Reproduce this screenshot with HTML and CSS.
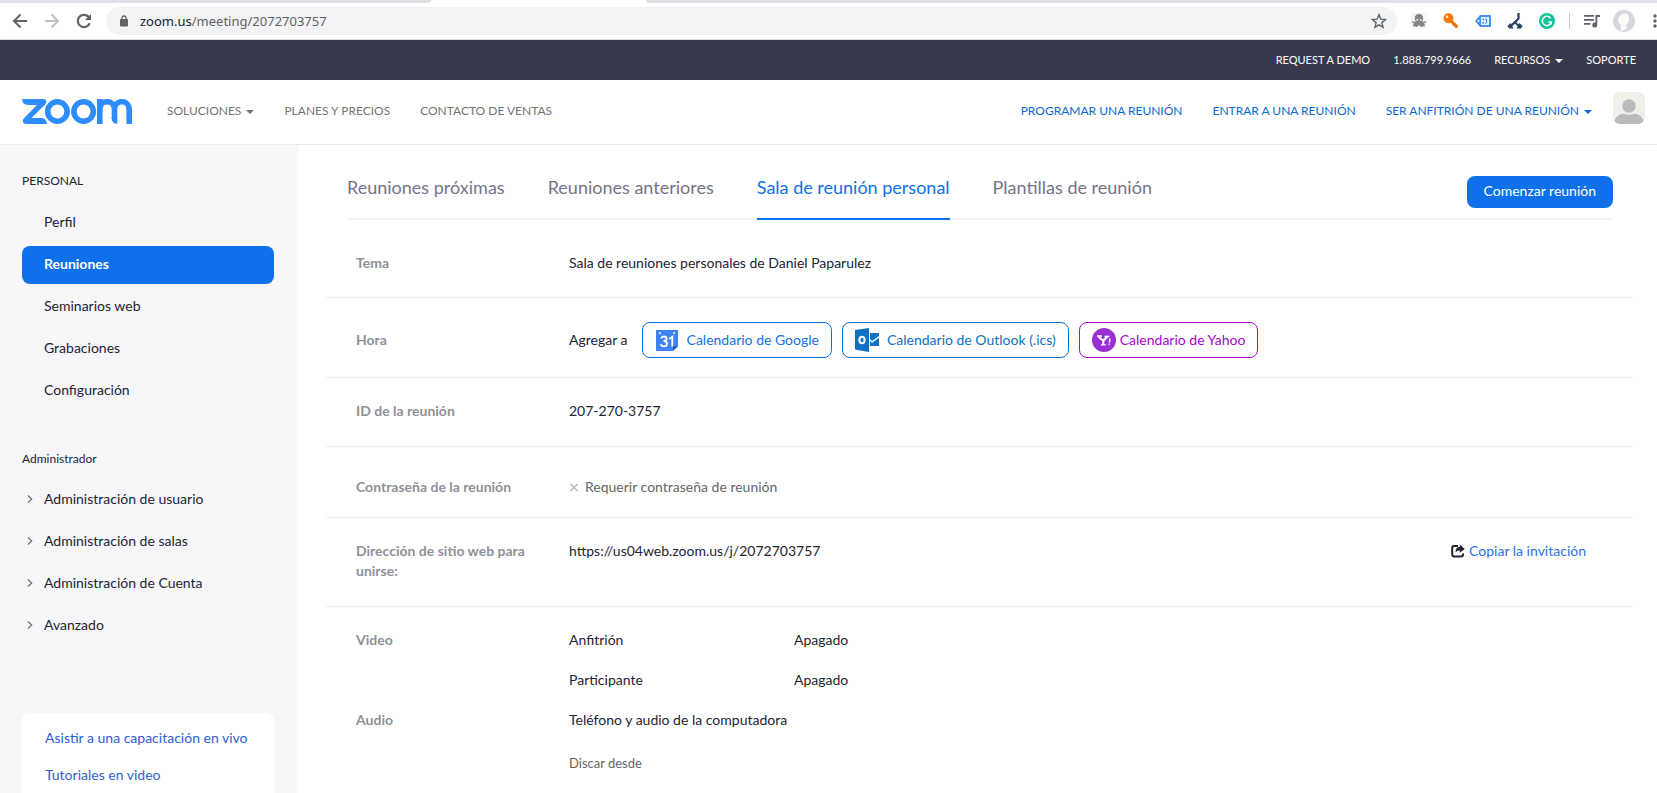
FILE: index.html
```html
<!DOCTYPE html>
<html lang="es">
<head>
<meta charset="utf-8">
<title>Mis reuniones - Zoom</title>
<link rel="stylesheet" href="styles.css">
</head>
<body>
<div class="window">
  <div class="tabstrip"><span class="tab-left"></span><span class="tab-right"></span></div>
  <div class="toolbar">
    <div class="nav-buttons">
      <button aria-label="Atrás"><svg width="16" height="16" viewBox="0 0 16 16" fill="none" stroke="#5f6368" stroke-width="2"><path d="M15 8H2.500M8.500 1.500L2 8l6.500 6.500"/></svg></button>
      <button aria-label="Adelante"><svg width="16" height="16" viewBox="0 0 16 16" fill="none" stroke="#bdbfc1" stroke-width="2"><path d="M1 8h12.500M7.500 1.500L14 8l-6.500 6.500"/></svg></button>
      <button aria-label="Recargar"><svg width="16" height="16" viewBox="0 0 16 16" fill="none" stroke="#5f6368" stroke-width="2.200"><path d="M13.800 10.200A6.200 6.200 0 1 1 12.400 3.600L14 5.200"/><path d="M15 1v6H9z" fill="#5f6368" stroke="none"/></svg></button>
    </div>
    <div class="address">
      <svg width="8" height="12" viewBox="0 0 8 12"><rect y="4" width="8" height="7.500" rx="1" fill="#5f6368"/><path d="M2 4.500V3a2 2 0 0 1 4 0v1.500" fill="none" stroke="#5f6368" stroke-width="1.300"/></svg>
      <span class="url"><b>zoom.us</b>/meeting/2072703757</span>
      <svg class="star" width="16" height="16" viewBox="0 0 16 16" fill="none" stroke="#5f6368" stroke-width="1.400"><path d="M8 1.800l1.800 4.300 4.700.4-3.600 3.100 1.100 4.600L8 11.800l-4 2.400 1.100-4.600L1.500 6.500l4.700-.4z"/></svg>
    </div>
    <div class="extensions">
      <svg width="16" height="16" viewBox="0 0 16 16"><path d="M0 0h16v16H0z" fill="#f6f6f6"/><path d="M8 1c3 0 4.500 2 4.200 4.500-.2 1.500-.8 2.500-.7 3.500l3-.8c1 .3.600 1.600-.3 1.600l-1.600.7c1 .8 1.700 1.500 1.100 2.500-.7.900-1.400.3-1.900.3-.5 1-1.500 1-2.300.3L8 12.200l-1.500 1.400c-.8.700-1.800.7-2.300-.3-.5 0-1.200.6-1.900-.3-.6-1 .1-1.700 1.100-2.500l-1.600-.7c-.9 0-1.300-1.300-.3-1.600l3 .8c.1-1-.5-2-.7-3.500C3.500 3 5 1 8 1z" fill="#858585"/><circle cx="6.200" cy="6.800" r=".9" fill="#fff"/><circle cx="9.800" cy="6.800" r=".9" fill="#fff"/></svg>
      <svg width="16" height="16" viewBox="0 0 16 16"><path d="M8.500 6.500l6.500 6-.5 2.500-2.500-.2-.7-1.600-1.700-.7-.5-1.600L6 8.500z" fill="#f26c0c"/><circle cx="5.500" cy="5.300" r="5" fill="#ff7a00"/><circle cx="4" cy="3.800" r="1.200" fill="#fff"/></svg>
      <svg width="16" height="16" viewBox="0 0 16 16"><path d="M5 2h11v12H5L0 8z" fill="#4a90f5"/><path d="M6 4h8v8H6z" fill="#e4efff"/><path d="M7.500 5.800h1.400v1.400H7.500zM7.500 9h1.400v1.400H7.500z" fill="#2f6fd6"/><path d="M10.800 5.300q1.800 2.700 0 5.400" stroke="#2f6fd6" fill="none"/><circle cx="3.500" cy="8" r="1" fill="#fff"/></svg>
      <svg width="16" height="16" viewBox="0 0 16 16" fill="none" stroke="#24415e"><path d="M11.500 0v5.500L3.500 13.500" stroke-width="2.200"/><path d="M8 9.500l4.500 4" stroke-width="1.800"/><path d="M.5 13l3-3 3 5.500H2zM15.500 13l-3-3-3 5.500H14z" fill="#24415e" stroke="none"/></svg>
      <svg width="16" height="16" viewBox="0 0 16 16"><circle cx="8" cy="8" r="8" fill="#15c39a"/><path d="M11.600 5.200A4.600 4.600 0 1 0 12.400 9H9.200M12.300 9v2.500" fill="none" stroke="#fff" stroke-width="1.500"/></svg>
      <span class="divider"></span>
      <svg width="16" height="16" viewBox="0 0 16 16" fill="#5f6368"><path d="M0 2h10v1.800H0zM0 6h10v1.800H0zM0 10h6.500v1.800H0zM11.500 2H16v2h-2.700v8a2.500 2.500 0 1 1-1.800-2.400z"/></svg>
      <svg class="profile" width="22" height="22" viewBox="0 0 22 22"><circle cx="11" cy="11" r="11" fill="#d5d7dc"/><path d="M11.500 3.500c4 0 5 3 4.500 6.200-.3 2.500-1.500 4.200-2.700 4.800l.2 4.500L8 21l-.5-6C5.500 13 5 10 5.500 8 6 5 8.500 3.500 11.500 3.500z" fill="#fafafa"/></svg>
      <svg class="more" width="4" height="16" viewBox="0 0 4 16" fill="#5f6368"><circle cx="2" cy="3" r="1.700"/><circle cx="2" cy="8" r="1.700"/><circle cx="2" cy="13" r="1.700"/></svg>
    </div>
  </div>

  <nav class="topbar">
    <a href="#">REQUEST A DEMO</a>
    <a href="#">1.888.799.9666</a>
    <a href="#">RECURSOS<span class="caret"></span></a>
    <a href="#">SOPORTE</a>
  </nav>

  <header class="header">
    <a class="logo" href="#" aria-label="zoom"><svg width="110" height="25" viewBox="0 0 110 25"><path d="M0 0H21.500Q25.200.5 24.200 3.500Q23.800 4.800 22.600 6L9.500 19H19.500Q24.500 19.300 25 25H4.500Q.5 24.800.8 21.500Q1 20.200 2.200 19L15 6H6Q.5 5.800 0 0Z" fill="#2d8cff"/><g fill="none" stroke="#2d8cff" stroke-width="5.600"><circle cx="35.400" cy="12.500" r="9.700"/><circle cx="61.600" cy="12.500" r="9.700"/><path d="M77.800 25V0M77.800 11C77.800 0 92.500 0 92.500 11V20M92.500 11C92.500 0 107.200 0 107.200 11V25"/></g><path d="M75 0h3l3 4-3 21q-3-.5-3-4zM89.700 18h5.600v7q-5.200-.5-5.600-5z" fill="#2d8cff"/></svg></a>
    <nav class="nav-main">
      <a href="#">SOLUCIONES<span class="caret"></span></a>
      <a href="#">PLANES Y PRECIOS</a>
      <a href="#">CONTACTO DE VENTAS</a>
    </nav>
    <nav class="nav-user">
      <a href="#">PROGRAMAR UNA REUNIÓN</a>
      <a href="#">ENTRAR A UNA REUNIÓN</a>
      <a href="#">SER ANFITRIÓN DE UNA REUNIÓN<span class="caret"></span></a>
    </nav>
    <svg class="avatar" width="32" height="32" viewBox="0 0 32 32"><rect width="32" height="32" rx="7" fill="#f0efea"/><circle cx="16" cy="14" r="6.700" fill="#bababa"/><path d="M1.500 29C3 24 8 21.500 10.500 21.800q5.500 2 11 0C24 21.500 29 24 30.500 29q-2 3-6 3h-17q-4 0-6-3z" fill="#bababa"/></svg>
  </header>

  <div class="page">
    <aside class="sidebar">
      <h2>PERSONAL</h2>
      <ul class="menu">
        <li><a href="#">Perfil</a></li>
        <li><a class="active" href="#">Reuniones</a></li>
        <li><a href="#">Seminarios web</a></li>
        <li><a href="#">Grabaciones</a></li>
        <li><a href="#">Configuración</a></li>
      </ul>
      <h2 class="admin">Administrador</h2>
      <ul class="menu">
        <li><a class="group" href="#"><svg width="6" height="8" viewBox="0 0 6 8"><path d="M1 .5L4.700 4 1 7.500"/></svg>Administración de usuario</a></li>
        <li><a class="group" href="#"><svg width="6" height="8" viewBox="0 0 6 8"><path d="M1 .5L4.700 4 1 7.500"/></svg>Administración de salas</a></li>
        <li><a class="group" href="#"><svg width="6" height="8" viewBox="0 0 6 8"><path d="M1 .5L4.700 4 1 7.500"/></svg>Administración de Cuenta</a></li>
        <li><a class="group" href="#"><svg width="6" height="8" viewBox="0 0 6 8"><path d="M1 .5L4.700 4 1 7.500"/></svg>Avanzado</a></li>
      </ul>
      <div class="help">
        <a href="#">Asistir a una capacitación en vivo</a>
        <a href="#">Tutoriales en video</a>
      </div>
    </aside>

    <main class="main">
      <div class="tabs">
        <nav class="tab-list">
          <a href="#">Reuniones próximas</a>
          <a href="#">Reuniones anteriores</a>
          <a class="current" href="#">Sala de reunión personal</a>
          <a href="#">Plantillas de reunión</a>
        </nav>
        <button class="start">Comenzar reunión</button>
      </div>

      <dl class="details">
        <div class="row topic"><dt>Tema</dt><dd>Sala de reuniones personales de Daniel Paparulez</dd></div>
        <div class="row time"><dt>Hora</dt>
          <dd class="calendars">
            <span>Agregar a</span>
            <a class="cal google" href="#"><svg width="24" height="24" viewBox="0 0 24 24"><path d="M1 2h22v16l-5 5H1z" fill="#3f83f6"/><path d="M18 23l5-5h-5z" fill="#2a5fc4"/><circle cx="5" cy="5" r="1" fill="#fff"/><circle cx="19" cy="5" r="1" fill="#fff"/><path d="M6 10.500q.8-2 3-2 2.600 0 2.600 2.300Q11.600 13 8.500 13q3.500 0 3.500 2.800 0 2.600-3 2.600-2.700 0-3.200-2.300M14.200 11l3.100-2.200v9.700" fill="none" stroke="#fff" stroke-width="1.800"/></svg>Calendario de Google</a>
            <a class="cal outlook" href="#"><svg width="24" height="24" viewBox="0 0 24 24"><path d="M0 2l14-2v24L0 21.500z" fill="#0f6fc0"/><ellipse cx="7" cy="12" rx="2.600" ry="3.300" fill="none" stroke="#fff" stroke-width="2"/><path d="M15 5h9v3l-7 5-2-2zM15 13l2 1.700 7-5V18h-9z" fill="#0f6fc0"/></svg>Calendario de Outlook (.ics)</a>
            <a class="cal yahoo" href="#"><svg width="24" height="24" viewBox="0 0 24 24"><circle cx="12" cy="12" r="12" fill="#9b2fd3"/><path d="M6.500 8.800l4.800 4 4-4M11.300 12.500v4.200" fill="none" stroke="#fff" stroke-width="2"/><path d="M5 8h5M12.500 8.500h5M9 16.800h4.800" stroke="#fff" stroke-width="1.300"/><path d="M17.800 10.500l-.3 4M17.300 15.500v1.300" stroke="#fff" stroke-width="1.500"/></svg>Calendario de Yahoo</a>
          </dd></div>
        <div class="row"><dt>ID de la reunión</dt><dd>207-270-3757</dd></div>
        <div class="row password"><dt>Contraseña de la reunión</dt><dd class="off"><svg width="10" height="10" viewBox="0 0 10 10"><path d="M1.500 2l7 7M8.500 2l-7 7" stroke="#b5b5b5" stroke-width="1.300"/></svg>Requerir contraseña de reunión</dd></div>
        <div class="row"><dt>Dirección de sitio web para unirse:</dt><dd class="join"><span>https://us04web.zoom.us/j/2072703757</span>
          <a class="copy" href="#"><svg width="14" height="14" viewBox="0 0 14 14"><path d="M7 2H3.200Q1.200 2 1.200 4v6.500q0 2 2 2H10q2 0 2-2V9.500" fill="none" stroke="#232333" stroke-width="2"/><path d="M8.800.5L13.800 5 8.800 8.800V6.600Q6.300 6.300 4.500 8.500 4.500 3 8.800 2.800z" fill="#232333"/></svg>Copiar la invitación</a></dd></div>
        <div class="row media">
          <dt>Video</dt><dd class="pair"><span>Anfitrión</span><span>Apagado</span></dd>
          <dd class="pair second"><span>Participante</span><span>Apagado</span></dd>
          <dt>Audio</dt><dd>Teléfono y audio de la computadora</dd>
          <dd class="dial second">Discar desde</dd>
        </div>
      </dl>
    </main>
  </div>
</div>
</body>
</html>
```

FILE: styles.css
```css
* { box-sizing: border-box; }
body {
  margin: 0;
  background: #fff;
  color: #232333;
  font: 14px/20px Lato, "Liberation Sans", sans-serif;
}
a { color: inherit; text-decoration: none; }
button { border: 0; padding: 0; background: none; font: inherit; }
svg { display: block; flex: none; }
.window { height: 100vh; overflow: hidden; display: flex; flex-direction: column; }

/* Browser frame */
.tabstrip { display: flex; justify-content: space-between; height: 3px; flex: none; }
.tab-left { width: 26%; background: #dee1e6; border-bottom-right-radius: 6px; }
.tab-right { width: 61%; background: #dee1e6; border-bottom-left-radius: 6px; }
.toolbar {
  display: flex;
  align-items: center;
  flex: none;
  height: 37px;
  padding-left: 12px;
  border-bottom: 1px solid #dadce0;
}
.nav-buttons { display: flex; gap: 16px; width: 94px; }
.address {
  display: flex;
  align-items: center;
  flex: 1;
  height: 28px;
  padding: 0 10px 0 14px;
  border-radius: 14px;
  background: #f1f3f4;
}
.url { margin-left: 12px; color: #5f6368; font: 13px/20px "Noto Sans", "Open Sans", sans-serif; }
.url b { color: #202124; font-weight: 400; }
.star { margin-left: auto; }
.extensions { display: flex; align-items: center; gap: 16px; padding-left: 14px; }
.divider { width: 1px; height: 16px; margin: 0 -2px 0 -2px; background: #c8cacd; }
.profile { margin-left: -3px; }
.more { margin-left: 2px; }

/* Site header */
.caret {
  display: inline-block;
  margin-left: 5px;
  border: 4px solid transparent;
  border-top-color: currentColor;
  border-bottom: 0;
  vertical-align: middle;
}
.topbar {
  display: flex;
  justify-content: flex-end;
  align-items: center;
  gap: 23px;
  flex: none;
  height: 40px;
  padding-right: 21px;
  background: #39394d;
  color: #fff;
  font-size: 11px;
}
.header {
  display: flex;
  align-items: center;
  flex: none;
  height: 65px;
  padding: 0 12px 2px 22px;
  border-bottom: 1px solid #ebebeb;
  font-size: 12px;
}
.nav-main, .nav-user { display: flex; gap: 30px; }
.nav-main { margin-left: 35px; color: #747474; }
.nav-user { margin-left: auto; color: #0b68d1; }
.avatar { margin: 0 0 6px 21px; }

.page { display: flex; flex: 1; min-height: 0; }

/* Sidebar */
.sidebar { flex: none; width: 298px; padding: 26px 24px 0 22px; background: #f7f7fa; }
.sidebar h2 { margin: 0 0 13px; font-size: 12px; line-height: 20px; font-weight: 400; }
.sidebar .admin { margin: 39px 0 12px; }
.menu { display: grid; gap: 4px; margin: 0; padding: 0; list-style: none; }
.menu a {
  display: flex;
  align-items: center;
  height: 38px;
  padding: 0 0 2px 22px;
  border-radius: 8px;
}
.menu .active { background: #0e71eb; color: #fff; font-weight: 700; }
.menu .group { gap: 11px; padding-left: 5px; }
.menu svg { fill: none; stroke: #747487; stroke-width: 1.3; }
.help {
  display: grid;
  gap: 17px;
  margin-top: 68px;
  padding: 15px 23px;
  border-radius: 8px;
  background: #fff;
  color: #2d60d8;
}

/* Meeting details */
.main { flex: 1; min-width: 0; padding: 0 24px 0 28px; }
.tabs {
  display: flex;
  align-items: flex-start;
  justify-content: space-between;
  margin: 0 20px 0 21px;
  border-bottom: 2px solid #f5f5f7;
}
.tab-list { display: flex; gap: 43px; margin-bottom: -2px; color: #747487; font-size: 18px; }
.tab-list a { padding: 32px 0 21px; border-bottom: 2px solid transparent; }
.tab-list .current { border-color: #0e71eb; color: #0e71eb; }
.start {
  height: 32px;
  margin-top: 31px;
  padding: 0 17px 2px;
  border-radius: 8px;
  background: #0e71eb;
  color: #fff;
}
.details { margin: 0; }
.row {
  display: grid;
  grid-template-columns: 183px 1fr;
  column-gap: 30px;
  padding: 23px 30px 25px;
  border-bottom: 1px solid #ededf0;
}
.topic { padding: 33px 30px 24px; }
.time { padding: 24px 30px 19px; align-items: center; }
.password { padding: 30px 30px 20px; }
dt { color: #909096; font-weight: 700; }
dd { margin: 0; }
.calendars { display: flex; align-items: center; gap: 10px; }
.calendars span { margin-right: 4px; }
.cal {
  display: flex;
  align-items: center;
  gap: 8px;
  height: 36px;
  padding: 0 12px;
  border: 1px solid;
  border-radius: 8px;
}
.google { color: #0e71eb; }
.outlook { color: #0f6fc0; }
.yahoo { gap: 4px; color: #a408cf; }
.off { display: flex; align-items: center; gap: 6px; color: #666; }
.join { display: flex; justify-content: space-between; align-items: flex-start; }
.copy { display: flex; align-items: center; gap: 4px; margin-right: 17px; color: #2d6fe8; }
.media { row-gap: 20px; border-bottom: 0; }
.pair { display: grid; grid-template-columns: 225px 1fr; }
.second { grid-column: 2; }
.dial { padding-top: 3px; color: #666; font-size: 13px; }
```
